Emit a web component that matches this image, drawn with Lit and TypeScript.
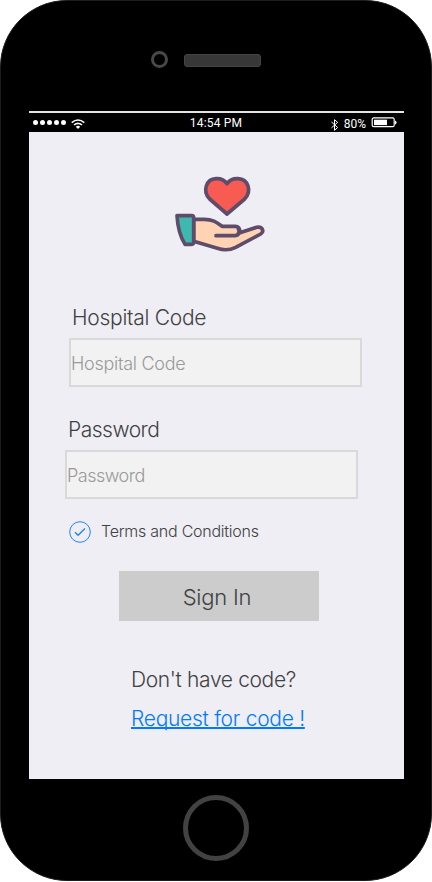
import { LitElement, html, css } from "lit";
import { customElement, property } from "lit/decorators.js";

@customElement("status-bar")
class StatusBar extends LitElement {
  static styles = css`
    :host { display: flex; box-sizing: border-box; height: 21px; border-top: 2px solid #e4e4e6; background: #000; color: #fff; font: 400 12px/19px Roboto, sans-serif; }
    .side { flex: 1; display: flex; align-items: center; }
    .left { padding-left: 4px; gap: 2px; }
    .dot { width: 5px; height: 5px; border-radius: 50%; background: #fff; }
    .wifi { margin-left: 3px; margin-top: 2px; }
    .time { letter-spacing: 0.2px; padding: 1px 0 0 2px; }
    .right { justify-content: flex-end; padding-right: 7px; }
    .pct { margin: 3px 5px 0 5px; }
    .bt { margin-top: 4px; }
    .battery { margin-top: 0; }
    svg { display: block; }
  `;
  render() {
    return html`
      <div class="side left">
        ${[0, 1, 2, 3, 4].map(() => html`<span class="dot"></span>`)}
        <svg class="wifi" width="14" height="10" viewBox="0 0 14 10" fill="none" stroke="#fff" stroke-width="1.6">
          <path d="M.7 3.6Q7 -1.6 13.3 3.6M3 6Q7 2.6 11 6" />
          <path d="M4.8 7.7Q7 6 9.2 7.7L7 9.9Z" fill="#fff" stroke="none" />
        </svg>
      </div>
      <div class="time">14:54 PM</div>
      <div class="side right">
        <svg class="bt" width="8" height="12" viewBox="0 0 8 12" fill="none" stroke="#fff" stroke-width="1">
          <path d="M.5 3L6.6 8.5 3.5 11.3V.7L6.6 3.4.5 8.8" />
        </svg>
        <span class="pct">80%</span>
        <svg class="battery" width="26" height="11" viewBox="0 0 26 11">
          <rect x="1.2" y=".9" width="22" height="8.8" rx="1.5" fill="none" stroke="#fff" stroke-width="1.2" />
          <rect x="3" y="2.7" width="13" height="5.4" fill="#fff" />
          <path d="M24 3.4q1.6.4 1.6 2t-1.6 2z" fill="#fff" />
        </svg>
      </div>
    `;
  }
}

@customElement("form-field")
class FormField extends LitElement {
  @property() label = "";
  static styles = css`
    :host { display: block; width: 293px; }
    .label { height: 28px; font-size: 21px; line-height: 30px; margin: 0 0 7px 3px; color: #414141; }
    .box { box-sizing: border-box; height: 49px; border: 2px solid #d9d9d9; background: #f2f2f2; color: #999; font-size: 18px; line-height: 48px; white-space: nowrap; }
  `;
  render() {
    return html`<div class="label">${this.label}</div><div class="box">${this.label}</div>`;
  }
}

@customElement("app-root")
class AppRoot extends LitElement {
  static styles = css`
    :host { display: block; height: 882px; background: #fff; font-family: Inter, "Liberation Sans", sans-serif; font-weight: 300; color: #414141; }
    .phone { box-sizing: border-box; width: 432px; height: 881px; border: 1px solid #1c1c1c; border-radius: 67px; background: #000; padding: 0 27px 0 28px; }
    .top { display: flex; align-items: flex-start; height: 110px; box-sizing: border-box; padding: 50px 0 0 122px; }
    .camera { box-sizing: border-box; width: 17px; height: 17px; border: 3px solid #484848; border-radius: 50%; }
    .speaker { box-sizing: border-box; width: 77px; height: 13px; margin: 3px 0 0 16px; border: 1px solid #444; border-radius: 3px; background: #373737; }
    .screen { height: 647px; background: #efeef5; display: flex; flex-direction: column; align-items: flex-start; }
    .logo { display: block; margin: 33px 0 43px 136px; }
    .hospital { margin-left: 40px; letter-spacing: -0.27px; }
    .password { margin: 28px 0 22px 36px; letter-spacing: -0.5px; }
    .terms { display: flex; align-items: center; gap: 10px; height: 22px; margin-left: 40px; font-size: 16px; line-height: 20px; letter-spacing: -0.25px; }
    .terms span { padding-bottom: 2px; }
    .button { width: 200px; height: 50px; margin: 28px 0 44px 90px; background: #ccc; font-size: 22px; line-height: 52px; text-align: center; text-indent: -4px; letter-spacing: -0.2px; }
    .question, .link { margin-left: 102px; font-size: 21px; line-height: 30px; height: 28px; letter-spacing: -0.36px; }
    .link { margin-top: 11px; color: #007aff; text-decoration: underline; text-decoration-thickness: 2px; text-underline-offset: 1px; text-decoration-skip-ink: none; letter-spacing: -0.28px; }
    .home { box-sizing: border-box; width: 66px; height: 66px; margin: 16px 0 0 154px; border: 5px solid #424242; border-radius: 50%; }
  `;
  render() {
    return html`
      <div class="phone">
        <div class="top"><div class="camera"></div><div class="speaker"></div></div>
        <status-bar></status-bar>
        <div class="screen">
          <svg class="logo" width="110" height="95" viewBox="0 0 330 285" stroke="#5f4c6b" stroke-width="11" stroke-linejoin="round" stroke-linecap="round">
            <path fill="#ffd3b3" d="M86 163H118C145 163 157 174 171 184H210C224 184 227 197 220 205L275 187C292 183 299 199 287 207L212 247C192 257 175 256 157 250L86 229Z" />
            <path fill="none" d="M153 212H211C222 211 226 201 220 192" />
            <path fill="#3db9b0" d="M36 152H80Q86 152 86 158V232Q86 238 80 238H60Q39 205 36 152Z" />
            <path fill="#f75b52" d="M186 147L134 102C111 78 124 42 153 41Q175 40 186 56Q197 40 219 41C249 42 262 78 239 102Z" />
          </svg>
          <form-field class="hospital" label="Hospital Code"></form-field>
          <form-field class="password" label="Password"></form-field>
          <div class="terms">
            <svg width="22" height="22" viewBox="0 0 22 22" fill="none" stroke="#2385fa">
              <circle cx="11" cy="11" r="10.3" />
              <path stroke-width="1.4" d="M6 11.2L9.1 14.3 16 7.6" />
            </svg>
            <span>Terms and Conditions</span>
          </div>
          <div class="button">Sign In</div>
          <div class="question">Don't have code?</div>
          <div class="link">Request for code !</div>
        </div>
        <div class="home"></div>
      </div>
    `;
  }
}
